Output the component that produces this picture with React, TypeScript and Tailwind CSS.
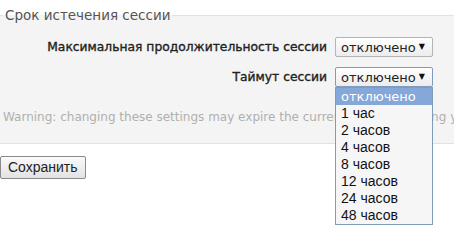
import React from 'react';

const options = ['отключено', '1 час', '2 часов', '4 часов', '8 часов', '12 часов', '24 часов', '48 часов'];

const SelectBox: React.FC<{ focused?: boolean; children?: React.ReactNode }> = ({ focused, children }) => (
  <div className="relative">
    <div
      className={`flex items-center justify-between w-[98px] h-[20px] pl-[5px] pr-[7px] rounded-[2px] border bg-gradient-to-b from-white to-[#ececec] text-[13px] text-[#222] font-['DejaVu_Sans',sans-serif] ${
        focused ? 'border-[#7f9bbd]' : 'border-[#b4b4b4]'
      }`}
    >
      <span className="leading-none">отключено</span>
      <span className="text-[8px] leading-none text-[#111]">▼</span>
    </div>
    {children}
  </div>
);

export default function App() {
  return (
    <div className="w-[454px] h-[246px] bg-white overflow-hidden font-['DejaVu_Sans',sans-serif]">
      <fieldset className="mt-[7px] w-[480px] border-t border-b border-[#e2e2e2] bg-[#f4f4f4] pb-[18px]">
        <legend className="ml-[3px] px-[2px] text-[13.5px] leading-[16px] text-[#555]">Срок истечения сессии</legend>

        <div className="flex items-center mt-[14px]">
          <label className="w-[327px] text-right text-[12.3px] text-[#222] [-webkit-text-stroke:0.35px_#222]">
            Максимальная продолжительность сессии
          </label>
          <div className="ml-[8px]">
            <SelectBox />
          </div>
        </div>

        <div className="flex items-center mt-[10px]">
          <label className="w-[327px] text-right text-[12.3px] text-[#222] [-webkit-text-stroke:0.35px_#222]">
            Таймут сессии
          </label>
          <div className="ml-[8px] relative z-10">
            <SelectBox focused>
              <ul className="absolute left-0 top-[20px] w-[98px] border border-[#7f9bbd] bg-[#f6f6f6]">
                {options.map((o, i) => (
                  <li
                    key={o}
                    className={
                      i === 0
                        ? "h-[17px] pl-[5px] text-[13px] leading-[17px] bg-[#86a8d8] text-white font-['DejaVu_Sans',sans-serif]"
                        : "h-[17px] pl-[5px] text-[14px] leading-[17px] text-[#111] font-['Liberation_Sans',sans-serif]"
                    }
                  >
                    {o}
                  </li>
                ))}
              </ul>
            </SelectBox>
          </div>
        </div>

        <p className="mt-[22px] pl-[3px] text-[12px] leading-[16px] text-[#b0b0b0] whitespace-nowrap">
          Warning: changing these settings may expire the current session, logging you out.
        </p>
      </fieldset>

      <button className="mt-[12px] h-[23px] px-[7px] border border-[#8a8a8a] rounded-[2px] bg-gradient-to-b from-[#fafafa] to-[#e2e2e2] text-[14px] text-[#222] font-['Liberation_Sans',sans-serif]">
        Сохранить
      </button>
    </div>
  );
}
